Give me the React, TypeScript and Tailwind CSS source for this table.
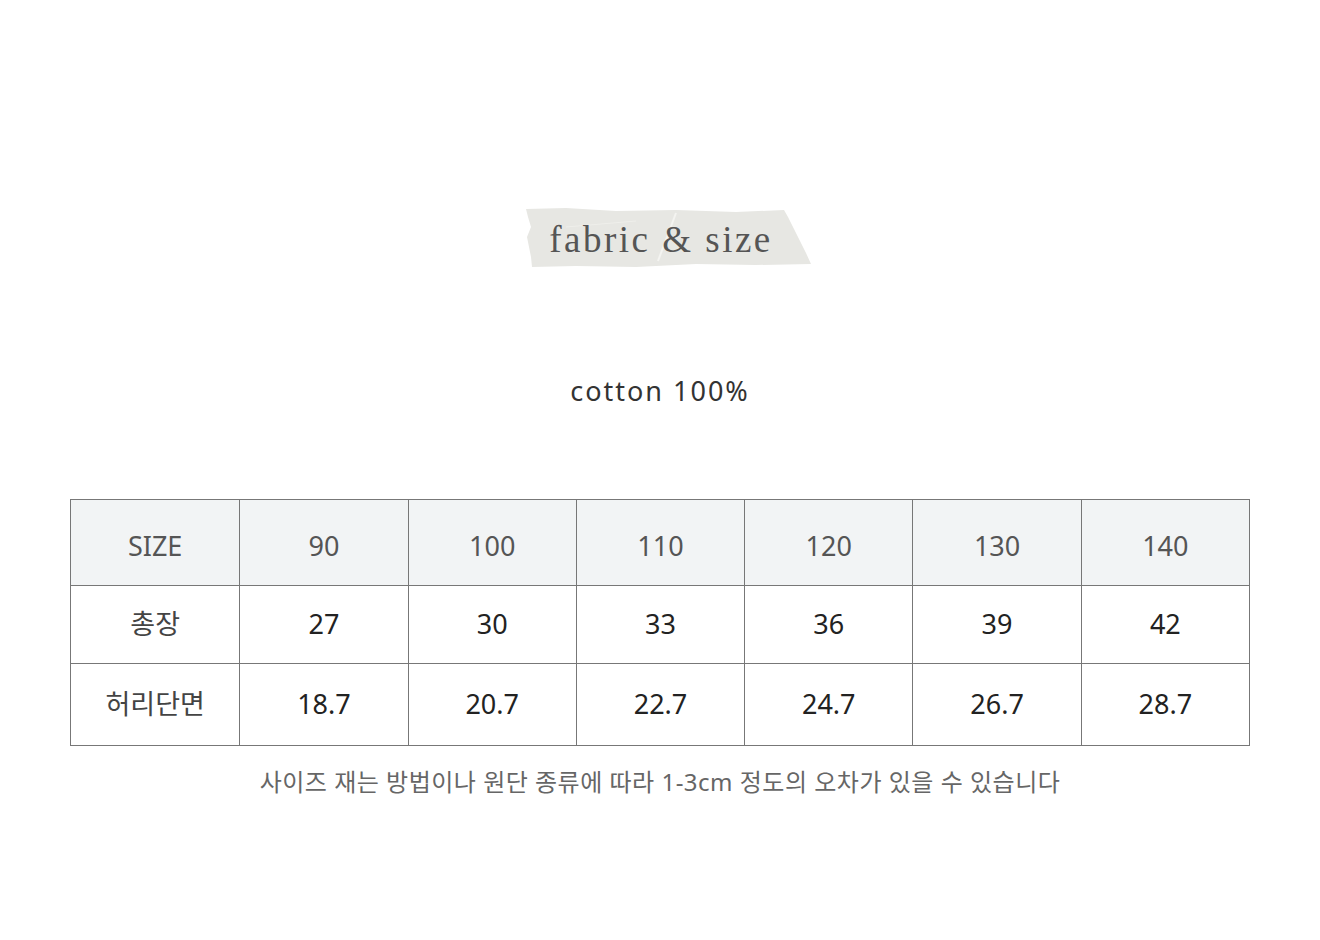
import React from "react";

const sizes = ["90", "100", "110", "120", "130", "140"];
const rows = [
  { label: "총장", values: ["27", "30", "33", "36", "39", "42"] },
  { label: "허리단면", values: ["18.7", "20.7", "22.7", "24.7", "26.7", "28.7"] },
];

function Tape() {
  return (
    <div className="relative w-[286px] h-[62px] flex items-center justify-center">
      <svg className="absolute inset-0" width="286" height="62" viewBox="0 0 286 62">
        <polygon
          points="0,2 40,1 90,4 150,3 210,5 258,3 262,10 268,22 274,34 280,46 285,57 230,58 170,57 110,60 50,59 6,60 5,50 3,40 1,30 5,20 2,10"
          fill="#e7e7e3"
        />
        <path d="M150,6 L132,54" stroke="#f4f4f1" strokeWidth="2" fill="none" />
        <path d="M40,20 L110,14" stroke="#efefeb" strokeWidth="1" fill="none" />
      </svg>
      <span className="relative text-[37px] leading-none tracking-[2.5px] text-[#555] pr-[16px] pt-[2px]" style={{ fontFamily: '"Liberation Serif", "DejaVu Serif", serif' }}>
        fabric &amp; size
      </span>
    </div>
  );
}

export default function App() {
  return (
    <div className="w-[1320px] h-[940px] bg-white flex flex-col items-center" style={{ fontFamily: '"Noto Sans", "Noto Sans CJK KR", sans-serif' }}>
      <div className="mt-[207px] ml-[18px]">
        <Tape />
      </div>
      <div className="mt-[108px] text-[27px] leading-none tracking-[2px] text-[#333]">cotton 100%</div>
      <div className="mt-[95px] w-[1180px] border border-[#777] grid grid-cols-7">
        <div className="h-[86px] pt-[8px] bg-[#f2f4f5] flex items-center justify-center text-[27px] text-[#555] border-b border-[#777]">SIZE</div>
        {sizes.map((s) => (
          <div key={s} className="h-[86px] pt-[8px] bg-[#f2f4f5] flex items-center justify-center text-[27px] text-[#555] border-b border-l border-[#777]">
            {s}
          </div>
        ))}
        {rows.map((r, i) => (
          <React.Fragment key={r.label}>
            <div className={`${i === 0 ? "h-[78px] border-b" : "h-[81px]"} flex items-center justify-center text-[27px] text-[#444] border-[#777]`}>
              {r.label}
            </div>
            {r.values.map((v, j) => (
              <div key={j} className={`${i === 0 ? "h-[78px] border-b" : "h-[81px]"} border-l flex items-center justify-center text-[27px] text-[#222] border-[#777]`}>
                {v}
              </div>
            ))}
          </React.Fragment>
        ))}
      </div>
      <div className="mt-[24px] text-[24px] leading-none tracking-[0.5px] text-[#666]">
        사이즈 재는 방법이나 원단 종류에 따라 1-3cm 정도의 오차가 있을 수 있습니다
      </div>
    </div>
  );
}
